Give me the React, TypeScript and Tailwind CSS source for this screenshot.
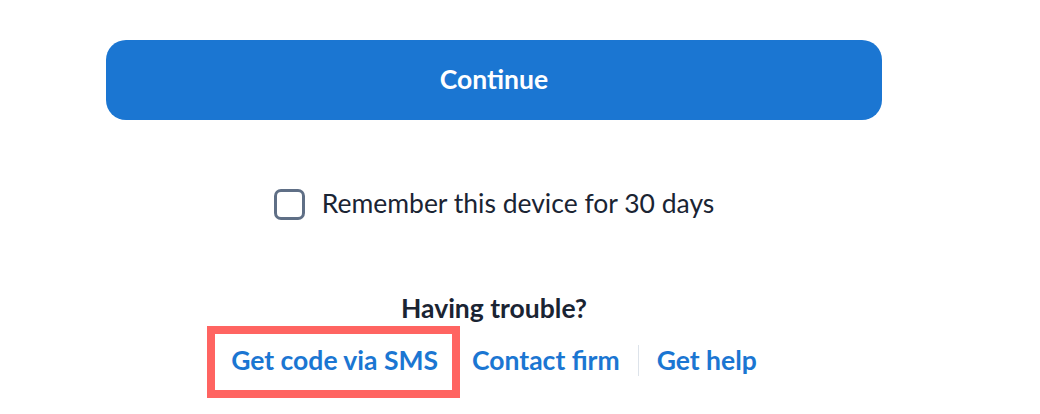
export default function App() {
  return (
    <div
      className="w-[1040px] h-[414px] bg-white overflow-hidden"
      style={{ fontFamily: 'Lato, "Noto Sans", sans-serif' }}
    >
      <div className="ml-[106px] w-[776px] pt-[40px] flex flex-col items-center">
        <button className="w-full h-[80px] rounded-[20px] bg-[#1b76d2] text-white text-[26.5px] font-bold">
          Continue
        </button>

        <label className="mt-[68px] h-[32px] flex items-center gap-[17px] text-[26.5px] text-[#1a2433]">
          <span className="w-[31px] h-[31px] rounded-[7px] border-[3px] border-[#5f6f86]" />
          Remember this device for 30 days
        </label>

        <div className="mt-[72px] leading-[32px] text-[26.5px] font-bold text-[#1a2433]">Having trouble?</div>

        <div className="mt-[20px] flex items-center leading-[32px] text-[26.5px] font-bold text-[#1b76d2]">
          <a className="relative">
            Get code via SMS
            {/* highlight annotation */}
            <span className="absolute -left-[24px] -right-[22px] -top-[18px] -bottom-[22px] border-[8px] border-[#ff6461]" />
          </a>
          <a className="ml-[34px]">Contact firm</a>
          <span className="mx-[18px] w-px h-[31px] bg-[#dde3ea]" />
          <a>Get help</a>
        </div>
      </div>
    </div>
  );
}
